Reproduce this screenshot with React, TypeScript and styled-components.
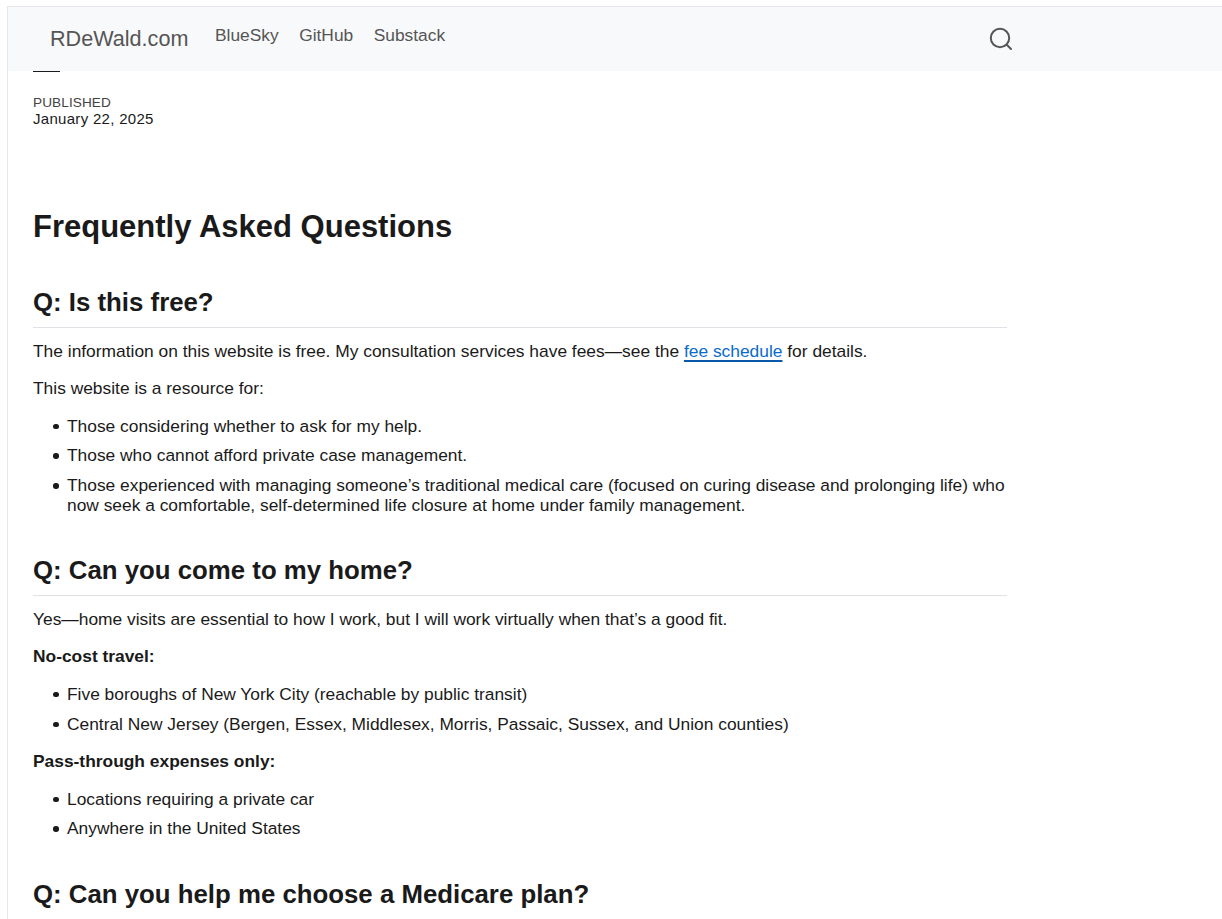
import React from "react";
import styled, { createGlobalStyle } from "styled-components";

const Global = createGlobalStyle`
  html, body { margin: 0; padding: 0; background: #fff; height: 100%; overflow: hidden; }
  body { font-family: "Liberation Sans", Arial, sans-serif; color: #1a1a1a; }
`;
const Frame = styled.div`
  margin: 6px 0 0 7px;
  border-top: 1px solid #e5e7eb;
  border-left: 1px solid #e5e7eb;
  height: 912px;
  overflow: hidden;
`;
const NavBar = styled.nav`
  height: 64px;
  background: #f8f9fa;
  display: flex;
  align-items: flex-start;
  color: #555;
`;
const Brand = styled.a`
  font-size: 21.6px;
  line-height: 26px;
  margin: 19px 0 0 42px;
  width: 165px;
  flex: none;
`;
const NavLinks = styled.div`
  display: flex;
  gap: 20.5px;
  width: 774px;
  flex: none;
  padding-top: 18px;
`;
const NavLink = styled.a`
  font-size: 17.36px;
  line-height: 20px;
`;
const SearchButton = styled.button`
  border: 0;
  padding: 0;
  background: none;
  color: #555;
  display: flex;
  margin-top: 20px;
`;
const Main = styled.main`
  width: 974px;
  padding-left: 25px;
`;
const Rule = styled.div`
  width: 27px;
  height: 1px;
  background: #1a1a1a;
`;
const Meta = styled.div`
  margin-top: 23px;
`;
const MetaLabel = styled.div`
  font-size: 13.6px;
  line-height: 15px;
  letter-spacing: 0.1px;
  color: #444;
`;
const MetaDate = styled.div`
  font-size: 15px;
  line-height: 17px;
  letter-spacing: 0.3px;
`;
const Title = styled.h1`
  font-size: 31px;
  line-height: 36px;
  font-weight: 700;
  margin: 82px 0 0;
`;
const Question = styled.h2`
  font-size: 25.8px;
  line-height: 30px;
  font-weight: 700;
  margin: 0 0 13px;
  padding-bottom: 10px;
  border-bottom: 1px solid #dee2e6;
`;
const Section = styled.section<{ $gap: number }>`
  margin-top: ${(p) => p.$gap}px;
`;
const Para = styled.p`
  font-size: 17.39px;
  line-height: 20px;
  margin: 0 0 17.5px;
`;
const Bold = styled.strong`
  font-weight: 700;
`;
const FeeLink = styled.a`
  color: #0b6bcb;
  text-decoration: underline;
  text-decoration-color: #0a58aa;
  text-decoration-thickness: 1.5px;
  text-underline-offset: 3px;
`;
const List = styled.ul`
  margin: 0 0 17.5px;
  padding: 0 0 0 34px;
  list-style: none;
`;
const Item = styled.li`
  position: relative;
  font-size: 17.38px;
  line-height: 20px;
  margin-bottom: 9.7px;
  &:last-child { margin-bottom: 0; }
  &::before {
    content: "";
    position: absolute;
    left: -14px;
    top: 8px;
    width: 5.5px;
    height: 5.5px;
    border-radius: 50%;
    background: #1a1a1a;
  }
`;

export default function App() {
  return (
    <>
      <Global />
      <Frame>
        <NavBar>
          <Brand>RDeWald.com</Brand>
          <NavLinks>
            <NavLink>BlueSky</NavLink>
            <NavLink>GitHub</NavLink>
            <NavLink>Substack</NavLink>
          </NavLinks>
          <SearchButton aria-label="Search">
            <svg width="24" height="24" viewBox="0 0 24 24" fill="none" stroke="currentColor" strokeWidth="2" strokeLinecap="round">
              <circle cx="11" cy="11" r="9.2" />
              <path d="M18 18l4 4" />
            </svg>
          </SearchButton>
        </NavBar>
        <Main>
          <Rule />
          <Meta>
            <MetaLabel>PUBLISHED</MetaLabel>
            <MetaDate>January 22, 2025</MetaDate>
          </Meta>
          <Title>Frequently Asked Questions</Title>
          <Section $gap={41.7}>
            <Question>Q: Is this free?</Question>
            <Para>
              The information on this website is free. My consultation services have fees—see the{" "}
              <FeeLink>fee schedule</FeeLink> for details.
            </Para>
            <Para>This website is a resource for:</Para>
            <List>
              <Item>Those considering whether to ask for my help.</Item>
              <Item>Those who cannot afford private case management.</Item>
              <Item>
                Those experienced with managing someone’s traditional medical care (focused on curing disease and
                prolonging life) who now seek a comfortable, self-determined life closure at home under family management.
              </Item>
            </List>
          </Section>
          <Section $gap={39.8}>
            <Question>Q: Can you come to my home?</Question>
            <Para>Yes—home visits are essential to how I work, but I will work virtually when that’s a good fit.</Para>
            <Para>
              <Bold>No-cost travel:</Bold>
            </Para>
            <List>
              <Item>Five boroughs of New York City (reachable by public transit)</Item>
              <Item>Central New Jersey (Bergen, Essex, Middlesex, Morris, Passaic, Sussex, and Union counties)</Item>
            </List>
            <Para>
              <Bold>Pass-through expenses only:</Bold>
            </Para>
            <List>
              <Item>Locations requiring a private car</Item>
              <Item>Anywhere in the United States</Item>
            </List>
          </Section>
          <Section $gap={40.4}>
            <Question>Q: Can you help me choose a Medicare plan?</Question>
          </Section>
        </Main>
      </Frame>
    </>
  );
}
